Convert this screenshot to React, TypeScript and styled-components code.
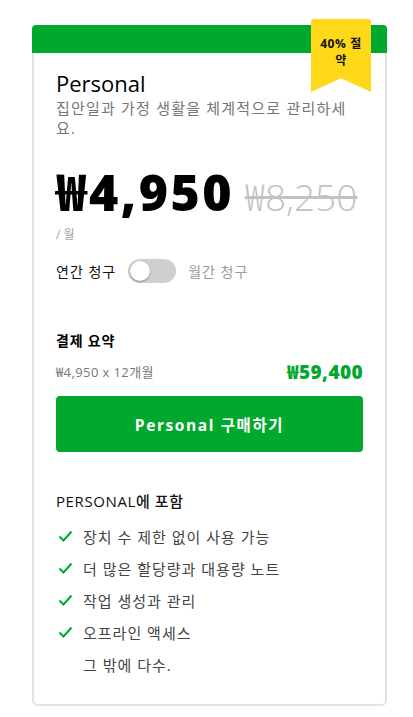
import React from "react";
import styled, { createGlobalStyle } from "styled-components";

const Global = createGlobalStyle`
  html, body { margin: 0; padding: 0; background: #fff; }
  body { font-family: "Open Sans", "Noto Sans CJK KR", sans-serif; color: #000; }
`;

const Page = styled.div`
  padding: 25px 26px 12px 32px;
  width: 413px;
  box-sizing: border-box;
`;

const Card = styled.div`
  position: relative;
  width: 355px;
  border: 2px solid #e3e3e3;
  border-top: none;
  border-radius: 6px;
  box-sizing: border-box;
`;

const TopBar = styled.div`
  height: 28px;
  margin: 0 -2px;
  background: #00a82d;
  border-radius: 4px 4px 0 0;
`;

const Ribbon = styled.div`
  position: absolute;
  top: -6px;
  right: 14px;
  width: 60px;
  height: 73px;
  background: #ffd81a;
  border-radius: 3px 3px 0 0;
  clip-path: polygon(0 0, 100% 0, 100% 100%, 50% 81%, 0 100%);
  box-sizing: border-box;
  padding: 16px 7px 0;
  text-align: center;
  font-size: 12px;
  font-weight: 700;
  line-height: 17px;
  letter-spacing: 0.6px;
  color: #111;
`;

const Body = styled.div`
  padding: 15px 22px 24px 22px;
  display: flex;
  flex-direction: column;
`;

const Title = styled.h2`
  margin: 0;
  font-size: 22px;
  font-weight: 500;
  line-height: 30px;
`;

const Desc = styled.p`
  margin: 0;
  font-size: 15px;
  line-height: 20px;
  letter-spacing: 1.2px;
  color: #757575;
`;

const PriceRow = styled.div`
  display: flex;
  align-items: baseline;
  gap: 11px;
  margin-top: 29px;
  line-height: 1;
  height: 50px;
`;

const Price = styled.span`
  font-size: 50px;
  font-weight: 800;
  letter-spacing: 2.5px;
`;

const OldPrice = styled.span`
  font-size: 37px;
  font-weight: 300;
  color: #c2c2c2;
  text-decoration: line-through;
  text-decoration-thickness: 3px;
`;

const PerMonth = styled.div`
  font-size: 12px;
  color: #a5a5a5;
  line-height: 16px;
  margin-top: 10px;
`;

const ToggleRow = styled.div`
  display: flex;
  align-items: center;
  gap: 12px;
  margin-top: 16px;
  font-size: 14px;
  letter-spacing: 1px;
`;

const ToggleLabel = styled.span<{ $muted?: boolean }>`
  color: ${(p) => (p.$muted ? "#9a9a9a" : "#111")};
`;

const Track = styled.span`
  position: relative;
  display: inline-block;
  width: 48px;
  height: 24px;
  border-radius: 12px;
  background: #cfcfcf;
`;

const Knob = styled.span`
  position: absolute;
  top: 2px;
  left: 2px;
  width: 20px;
  height: 20px;
  border-radius: 50%;
  background: #fff;
  box-shadow: 0 1px 2px rgba(0, 0, 0, 0.35);
`;

const SummaryTitle = styled.div`
  margin-top: 48px;
  font-size: 14px;
  font-weight: 700;
  line-height: 20px;
  letter-spacing: 0.8px;
`;

const SummaryRow = styled.div`
  display: flex;
  justify-content: space-between;
  align-items: center;
  margin-top: 6px;
`;

const SummaryCalc = styled.span`
  font-size: 13px;
  letter-spacing: 0.4px;
  color: #777;
`;

const SummaryTotal = styled.span`
  font-size: 19px;
  font-weight: 800;
  letter-spacing: 0.4px;
  color: #00a82d;
`;

const BuyButton = styled.button`
  margin-top: 11px;
  height: 56px;
  border: none;
  border-radius: 4px;
  background: #00a82d;
  color: #fff;
  font-family: inherit;
  font-size: 15.5px;
  font-weight: 700;
  letter-spacing: 1.6px;
  cursor: pointer;
`;

const IncludesTitle = styled.div`
  margin-top: 38px;
  font-size: 15px;
  font-weight: 500;
  line-height: 22px;
  letter-spacing: 0.6px;
  color: #111;
`;

const List = styled.ul`
  list-style: none;
  margin: 8px 0 0;
  padding: 0;
  display: flex;
  flex-direction: column;
`;

const Item = styled.li`
  display: flex;
  align-items: center;
  height: 32px;
  font-size: 15px;
  letter-spacing: 1px;
  color: #444;
`;

const CheckSlot = styled.span`
  width: 25px;
  display: inline-flex;
  padding-left: 2px;
`;

const Check = () => (
  <svg width="15" height="12" viewBox="0 0 15 12">
    <path d="M1.5 6.5 L5.5 10.5 L13.5 1.5" fill="none" stroke="#00a82d" strokeWidth="2" />
  </svg>
);

const features = [
  "장치 수 제한 없이 사용 가능",
  "더 많은 할당량과 대용량 노트",
  "작업 생성과 관리",
  "오프라인 액세스",
];

export default function App() {
  return (
    <Page>
      <Global />
      <Card>
        <TopBar />
        <Ribbon>40% 절약</Ribbon>
        <Body>
          <Title>Personal</Title>
          <Desc>집안일과 가정 생활을 체계적으로 관리하세요.</Desc>
          <PriceRow>
            <Price>₩4,950</Price>
            <OldPrice>₩8,250</OldPrice>
          </PriceRow>
          <PerMonth>/ 월</PerMonth>
          <ToggleRow>
            <ToggleLabel>연간 청구</ToggleLabel>
            <Track>
              <Knob />
            </Track>
            <ToggleLabel $muted>월간 청구</ToggleLabel>
          </ToggleRow>
          <SummaryTitle>결제 요약</SummaryTitle>
          <SummaryRow>
            <SummaryCalc>₩4,950 x 12개월</SummaryCalc>
            <SummaryTotal>₩59,400</SummaryTotal>
          </SummaryRow>
          <BuyButton>Personal 구매하기</BuyButton>
          <IncludesTitle>PERSONAL에 포함</IncludesTitle>
          <List>
            {features.map((f) => (
              <Item key={f}>
                <CheckSlot>
                  <Check />
                </CheckSlot>
                {f}
              </Item>
            ))}
            <Item>
              <CheckSlot />
              그 밖에 다수.
            </Item>
          </List>
        </Body>
      </Card>
    </Page>
  );
}
